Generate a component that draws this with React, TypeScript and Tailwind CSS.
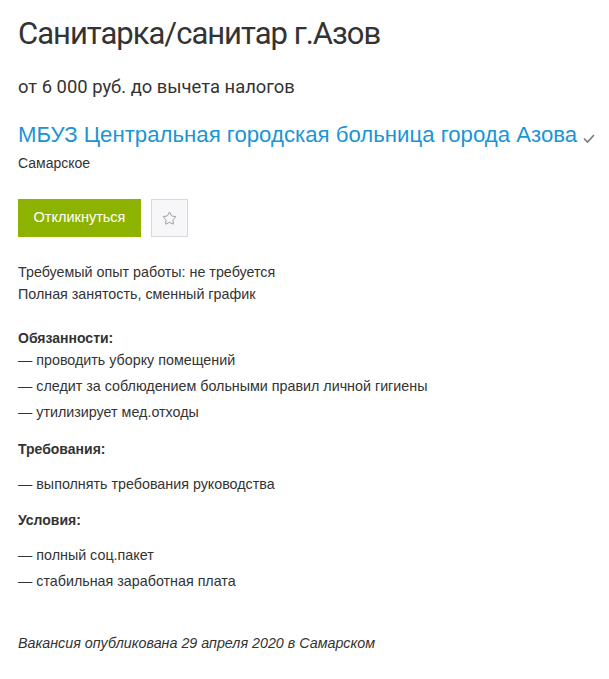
import { Star } from 'lucide-react';

const duties = [
  'проводить уборку помещений',
  'следит за соблюдением больными правил личной гигиены',
  'утилизирует мед.отходы',
];

export default function App() {
  return (
    <div className="min-h-screen bg-white pl-[18px] pt-[14px] text-[#333]">
      <h1 className="text-[31px] leading-[40px] text-[#333] tracking-[-1px]" style={{ fontFamily: 'Roboto, sans-serif' }}>
        Санитарка/санитар г.Азов
      </h1>
      <div className="mt-[22px] text-[18.4px] leading-[22px] text-[#333]" style={{ fontFamily: 'Roboto, sans-serif' }}>
        от 6 000 руб. до вычета налогов
      </div>

      <div className="mt-[22px] flex items-center gap-[5px] whitespace-nowrap">
        <a className="text-[22.2px] leading-[30px] text-[#1a95d4]" style={{ fontFamily: '"Liberation Sans", Arial, sans-serif' }}>
          МБУЗ Центральная городская больница города Азова
        </a>
        <svg width="14" height="14" viewBox="0 0 14 14" className="mt-[6px] shrink-0">
          <path d="M2 7.5 L5.5 11 L12 4" fill="none" stroke="#777" strokeWidth="1.6" />
        </svg>
      </div>
      <div className="mt-[4px] text-[14px] leading-[18px]" style={{ fontFamily: '"Liberation Sans", sans-serif' }}>
        Самарское
      </div>

      <div className="mt-[27px] flex gap-[10px]">
        <button className="h-[38px] w-[123px] bg-[#8db300] text-[14.5px] text-white" style={{ fontFamily: '"Liberation Sans", sans-serif' }}>
          Откликнуться
        </button>
        <button className="flex h-[38px] w-[37px] items-center justify-center border border-[#d9d9d9] bg-[#f7f7f9]">
          <Star size={15} strokeWidth={1.3} color="#888" />
        </button>
      </div>

      <div className="mt-[24px] text-[14.3px] leading-[22px]" style={{ fontFamily: '"Liberation Sans", sans-serif' }}>
        <div>Требуемый опыт работы: не требуется</div>
        <div>Полная занятость, сменный график</div>

        <div className="mt-[24px] text-[14px] font-bold leading-[18px]">Обязанности:</div>
        <ul className="leading-[26px]">
          {duties.map(d => (
            <li key={d}>— {d}</li>
          ))}
        </ul>

        <div className="mt-[14px] text-[14px] font-bold leading-[20px]">Требования:</div>
        <ul className="mt-[12px] leading-[26px]">
          <li>— выполнять требования руководства</li>
        </ul>

        <div className="mt-[13px] text-[14px] font-bold leading-[20px]">Условия:</div>
        <ul className="mt-[12px] leading-[26px]">
          <li>— полный соц.пакет</li>
          <li>— стабильная заработная плата</li>
        </ul>

        <div className="mt-[40px] italic leading-[18px]">Вакансия опубликована 29 апреля 2020 в Самарском</div>
      </div>
    </div>
  );
}
